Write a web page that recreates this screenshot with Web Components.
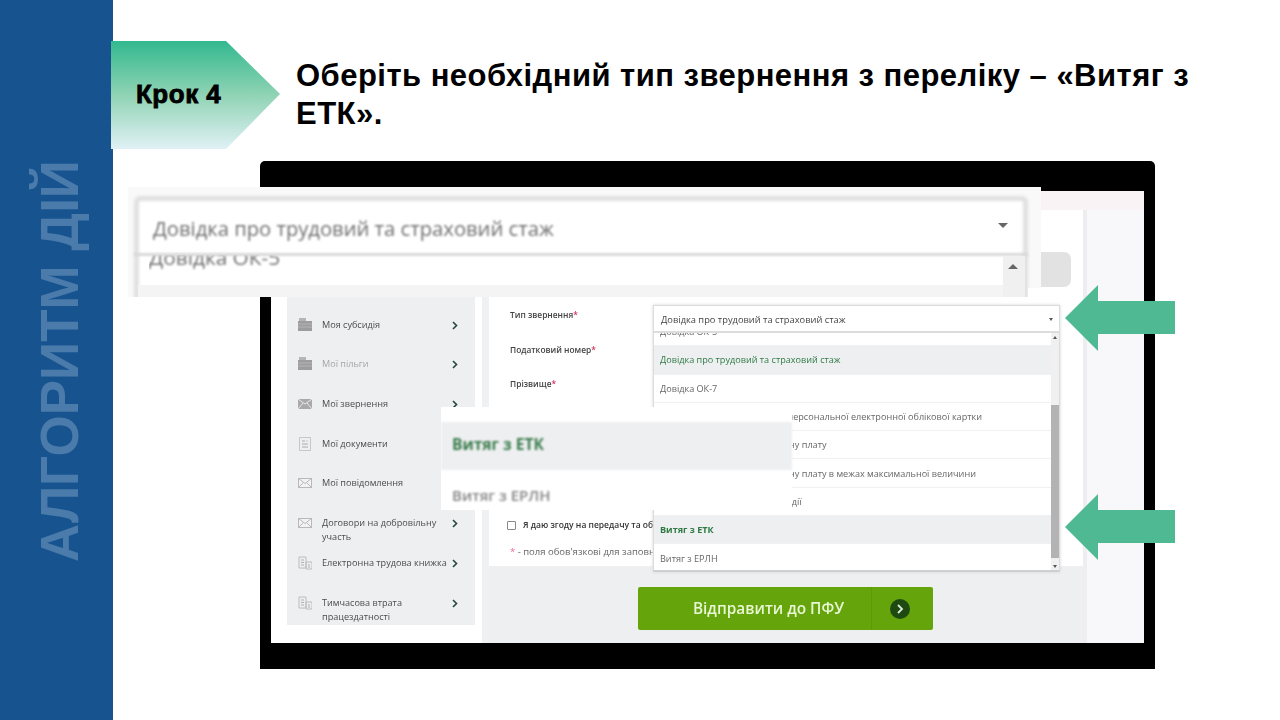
<!DOCTYPE html>
<html lang="uk">
<head>
<meta charset="utf-8">
<title>Крок 4</title>
<style>
	html, body { margin: 0; padding: 0; background: #fff; }
	body { width: 1280px; height: 720px; overflow: hidden; font-family: "Liberation Sans", sans-serif; }
	slide-page { width: 1280px; height: 720px; }
</style>
</head>
<body>
<slide-page>
	<side-rail slot="rail">АЛГОРИТМ ДІЙ</side-rail>
	<step-badge slot="head">Крок 4</step-badge>
	<slide-title slot="head">Оберіть необхідний тип звернення з переліку – «Витяг з ЕТК».</slide-title>
	<monitor-frame slot="body"></monitor-frame>
</slide-page>

<script>
const ICONS = {
	folder: '<rect x="1" y="0" width="7" height="3" fill="#b5b5b7"/><rect x="0" y="3" width="14" height="10" fill="#9d9d9f"/><path d="M0 6h14M0 9h14" stroke="#bdbdbf" stroke-width=".7"/>',
	mail: '<rect x="0" y="2" width="14" height="10" fill="#a9a9ab"/><path d="M0 2l7 5 7-5M0 12l5-6M14 12l-5-6" stroke="#e8e8ea" fill="none"/>',
	mailline: '<rect x=".5" y="2.5" width="13" height="9" fill="#f2f2f4" stroke="#b9b9bb"/><path d="M.5 2.5l6.5 5 6.5-5M.5 11.5l5-5M13.5 11.5l-5-5" stroke="#b9b9bb" fill="none"/>',
	doc: '<rect x="1.5" y=".5" width="11" height="13" fill="none" stroke="#c8c8ca"/><path d="M4 4h3M4 7h6M4 10h6" stroke="#aaaaac"/><path d="M9 3v2" stroke="#c8c8ca"/>',
	book: '<path d="M1 1h7v11H1zM8 6h6v7H8z" fill="none" stroke="#bcbcbe"/><path d="M3 4h3M3 6.5h3M3 9h3M10 9h2M10 11h2" stroke="#b0b0b2"/>'
};

class SlidePage extends HTMLElement {
	constructor() {
		super();
		this.attachShadow({ mode: 'open' });
		this.shadowRoot.innerHTML = `
			<style>
				:host { display: flex; }
				main { flex: 1; min-width: 0; display: flex; flex-direction: column; }
				header { display: flex; margin-left: -2px; padding-top: 41px; height: 108px; }
			</style>
			<slot name="rail"></slot>
			<main>
				<header><slot name="head"></slot></header>
				<slot name="body"></slot>
			</main>
		`;
	}
}

class SideRail extends HTMLElement {
	constructor() {
		super();
		this.attachShadow({ mode: 'open' });
		this.shadowRoot.innerHTML = `
			<style>
				:host { display: flex; flex: none; width: 113px; height: 720px; background: #17548f; position: relative; z-index: 1; }
				span {
					writing-mode: vertical-rl;
					transform: rotate(180deg);
					margin: 162px 0 0 33px;
					height: 400px;
					font: bold 53px/53px "Liberation Sans", sans-serif;
					color: #4a7bab;
					white-space: nowrap;
				}
			</style>
			<span><slot></slot></span>
		`;
	}
}

class StepBadge extends HTMLElement {
	constructor() {
		super();
		this.attachShadow({ mode: 'open' });
		this.shadowRoot.innerHTML = `
			<style>
				:host {
					display: flex;
					flex: none;
					align-items: center;
					box-sizing: border-box;
					width: 169px;
					height: 108px;
					padding: 0 0 1px 25px;
					background: linear-gradient(#33b98f, #8fd3b4 50%, #e0f1f5);
					clip-path: polygon(0 0, 115px 0, 169px 53px, 115px 108px, 0 108px);
					position: relative;
					z-index: 2;
					font: bold 26px "Liberation Sans", sans-serif;
					letter-spacing: .5px;
					color: #000;
					-webkit-text-stroke: .8px #000;
				}
			</style>
			<slot></slot>
		`;
	}
}

class SlideTitle extends HTMLElement {
	constructor() {
		super();
		this.attachShadow({ mode: 'open' });
		this.shadowRoot.innerHTML = `
			<style>
				:host {
					display: block;
					margin: 16px 0 0 16px;
					width: 920px;
					font: bold 31px/38px "Liberation Sans", sans-serif;
					letter-spacing: .47px;
					color: #000;
				}
			</style>
			<slot></slot>
		`;
	}
}

class MonitorFrame extends HTMLElement {
	constructor() {
		super();
		this.attachShadow({ mode: 'open' });
		this.shadowRoot.innerHTML = `
			<style>
				:host {
					display: block;
					box-sizing: border-box;
					position: relative;
					width: 895px;
					height: 508px;
					margin: 12px 0 0 147px;
					padding: 30px 11px 26px;
					background: #000;
					border-radius: 5px 5px 0 0;
				}
				.screen { height: 452px; display: flex; flex-direction: column; background: #fff; filter: blur(.45px); }
				.top { flex: none; height: 19px; background: #f9f3f6; }
				.work { flex: 1; display: flex; min-height: 0; }
				.gutter { flex: none; width: 7px; background: #f0f1f3; }
				.page { flex: none; width: 594px; display: flex; flex-direction: column; background: #eeeff1; }
				.pad { flex: none; height: 86px; background: #fff; }
				.bottom { flex: 1; display: flex; justify-content: center; padding: 21px 2px 0 0; }
				.edge { flex: none; width: 4px; background: #eeeef0; }
				.far { flex: 1; background: #f8f8fb; }
				.grey-btn {
					position: absolute;
					left: 781px;
					top: 91px;
					width: 30px;
					height: 35px;
					background: #e2e2e2;
					border-radius: 0 7px 7px 0;
				}
			</style>
			<div class="screen">
				<div class="top"></div>
				<div class="work">
					<portal-nav></portal-nav>
					<div class="gutter"></div>
					<div class="page">
						<div class="pad"></div>
						<request-form></request-form>
						<div class="bottom"><send-button>Відправити до ПФУ</send-button></div>
					</div>
					<div class="edge"></div>
					<div class="far"></div>
				</div>
			</div>
			<div class="grey-btn"></div>
			<zoom-top></zoom-top>
			<zoom-bottom></zoom-bottom>
			<pointer-arrow style="top:124px"></pointer-arrow>
			<pointer-arrow style="top:333px"></pointer-arrow>
		`;
	}
}

class PortalNav extends HTMLElement {
	constructor() {
		super();
		this.attachShadow({ mode: 'open' });
		this.shadowRoot.innerHTML = `
			<style>
				:host { display: block; flex: none; width: 211px; padding-top: 86px; box-sizing: border-box; background: #fff; }
				.panel { box-sizing: border-box; height: 329px; margin-left: 16px; width: 188px; padding-top: 9.7px; background: #eeeff1; }
			</style>
			<div class="panel">
				<nav-item icon="folder">Моя субсидія</nav-item>
				<nav-item icon="folder" muted>Мої пільги</nav-item>
				<nav-item icon="mail">Мої звернення</nav-item>
				<nav-item icon="doc">Мої документи</nav-item>
				<nav-item icon="mailline">Мої повідомлення</nav-item>
				<nav-item icon="mailline">Договори на добровільну участь</nav-item>
				<nav-item icon="book">Електронна трудова книжка</nav-item>
				<nav-item icon="book">Тимчасова втрата працездатності</nav-item>
			</div>
		`;
	}
}

class NavItem extends HTMLElement {
	constructor() {
		super();
		this.attachShadow({ mode: 'open' });
	}

	connectedCallback() {
		const icon = ICONS[this.getAttribute('icon')] || '';
		this.shadowRoot.innerHTML = `
			<style>
				:host {
					display: flex;
					box-sizing: border-box;
					height: 39.7px;
					padding: 12px 0 0 11px;
					font: 9.1px/14px "Open Sans", sans-serif;
					color: ${this.hasAttribute('muted') ? '#a6a6a8' : '#4b4b4d'};
				}
				.icon { flex: none; width: 14px; height: 14px; margin-right: 10px; }
				.label { width: 129px; flex: none; }
				.chev { flex: none; width: 6px; height: 9px; margin: 3px 0 0 1px; }
			</style>
			<svg class="icon" viewBox="0 0 14 14">${icon}</svg>
			<span class="label"><slot></slot></span>
			<svg class="chev" viewBox="0 0 6 9"><path d="M1 1l3.5 3.5L1 8" fill="none" stroke="#27463a" stroke-width="1.6"/></svg>
		`;
	}
}

class RequestForm extends HTMLElement {
	constructor() {
		super();
		this.attachShadow({ mode: 'open' });
		this.shadowRoot.innerHTML = `
			<style>
				:host {
					display: flex;
					flex-direction: column;
					flex: none;
					box-sizing: border-box;
					position: relative;
					height: 270px;
					padding: 12.4px 0 0 21px;
					background: #fff;
					font: 8.4px/14px "Open Sans", sans-serif;
					color: #444;
				}
				.row { flex: none; height: 34.5px; font-weight: 600; }
				b { color: #d0345e; font-weight: 600; }
				.agree, .note { white-space: nowrap; }
				.agree { margin: auto 0 0 -3px; display: flex; align-items: center; gap: 7px; font-weight: 600; color: #333; font-size: 8.5px; }
				.box { flex: none; width: 7px; height: 7px; border: 1px solid #888; border-radius: 1px; }
				.note { margin: 13px 0 7px; color: #666; font-size: 9.5px; }
				.note b { color: #ee6f90; font-weight: 400; }
				request-select { position: absolute; left: 164px; top: 9px; }
			</style>
			<div class="row">Тип звернення<b>*</b></div>
			<div class="row">Податковий номер<b>*</b></div>
			<div class="row">Прізвище<b>*</b></div>
			<div class="agree"><span class="box"></span><span>Я даю згоду на передачу та об</span></div>
			<div class="note"><b>*</b> - поля обов'язкові для заповне</div>
			<request-select></request-select>
		`;
	}
}

class RequestSelect extends HTMLElement {
	constructor() {
		super();
		this.attachShadow({ mode: 'open' });
		this.shadowRoot.innerHTML = `
			<style>
				:host {
					display: block;
					box-sizing: border-box;
					width: 407px;
					height: 267px;
					background: #fff;
					border: 1px solid #dcdcde;
					border-bottom: 2px solid #cfcfd1;
					box-shadow: 0 0 3px #d5d5d7;
					font: 9.1px "Open Sans", sans-serif;
					color: #666;
					overflow: hidden;
				}
				.value {
					box-sizing: border-box;
					height: 27px;
					display: flex;
					align-items: center;
					justify-content: space-between;
					padding: 2px 6px 0 7px;
					color: #444;
					font-size: 9.3px;
					border-bottom: 2px solid #dcdcde;
					background: #fff;
					position: relative;
				}
				.value i { width: 0; height: 0; border: 2.5px solid transparent; border-top: 3px solid #555; border-bottom: 0; }
				.list { position: relative; height: 238px; overflow: hidden; padding-right: 8px; }
				.opts { margin-top: -15px; }
				.bar { position: absolute; right: 0; top: 0; bottom: 0; width: 8px; background: #f0f0f1; }
				.thumb { position: absolute; left: 0; right: 0; top: 72px; height: 153px; background: #b3b3b4; }
				.up, .down { position: absolute; left: 2px; width: 0; height: 0; border: 2px solid transparent; }
				.up { top: 3px; border-bottom: 3px solid #555; border-top: 0; }
				.down { bottom: 3px; border-top: 3px solid #555; border-bottom: 0; }
			</style>
			<div class="value">Довідка про трудовий та страховий стаж<i></i></div>
			<div class="list">
				<div class="opts">
					<select-option>Довідка ОК-5</select-option>
					<select-option active>Довідка про трудовий та страховий стаж</select-option>
					<select-option>Довідка ОК-7</select-option>
					<select-option>Інформація з індивідуальної персональної електронної облікової картки</select-option>
					<select-option>Довідка про середню заробітну плату</select-option>
					<select-option>Довідка про середню заробітну плату в межах максимальної величини</select-option>
					<select-option>Довідка про отримання субсидії</select-option>
					<select-option current>Витяг з ЕТК</select-option>
					<select-option>Витяг з ЕРЛН</select-option>
				</div>
				<div class="bar"><div class="up"></div><div class="thumb"></div><div class="down"></div></div>
			</div>
		`;
	}
}

class SelectOption extends HTMLElement {
	constructor() {
		super();
		this.attachShadow({ mode: 'open' });
	}

	connectedCallback() {
		const on = this.hasAttribute('active') || this.hasAttribute('current');
		this.shadowRoot.innerHTML = `
			<style>
				:host {
					display: flex;
					align-items: center;
					box-sizing: border-box;
					height: 28.3px;
					padding-left: 6px;
					white-space: nowrap;
					border-bottom: 1px solid #f1f1f2;
					background: ${on ? '#eeeff1' : '#fff'};
					color: ${on ? '#2f7a45' : '#666'};
					font-weight: ${this.hasAttribute('current') ? '700' : '400'};
				}
			</style>
			<slot></slot>
		`;
	}
}

class SendButton extends HTMLElement {
	constructor() {
		super();
		this.attachShadow({ mode: 'open' });
		this.shadowRoot.innerHTML = `
			<style>
				:host {
					display: flex;
					flex: none;
					box-sizing: border-box;
					width: 295px;
					height: 43px;
					background: #65a50b;
					border-radius: 2px;
					font: 600 15.4px "Open Sans", sans-serif;
					color: #e8f6d4;
				}
				.text { flex: 1; display: flex; align-items: center; justify-content: center; padding-left: 29px; white-space: nowrap; }
				.go { flex: none; box-sizing: border-box; width: 62px; padding-right: 4px; display: flex; align-items: center; justify-content: center; border-left: 1px solid #5d9a0a; }
				svg { width: 20px; height: 20px; }
			</style>
			<div class="text"><slot></slot></div>
			<div class="go">
				<svg viewBox="0 0 20 20"><circle cx="10" cy="10" r="10" fill="#1e4a12"/><path d="M8 6l4 4-4 4" fill="none" stroke="#dfe9d8" stroke-width="1.8"/></svg>
			</div>
		`;
	}
}

class ZoomTop extends HTMLElement {
	constructor() {
		super();
		this.attachShadow({ mode: 'open' });
		this.shadowRoot.innerHTML = `
			<style>
				:host {
					position: absolute;
					left: -132px;
					top: 26px;
					width: 913px;
					height: 110px;
					background: #f9f9f9;
					clip-path: polygon(0 0, 100% 0, 100% 101px, 900px 101px, 900px 100%, 0 100%);
					font: 20.2px "Open Sans", sans-serif;
					color: #6f6f6f;
				}
				.frame { position: absolute; left: 6px; top: 9px; width: 894px; height: 120px; box-sizing: border-box; background: #fff; border: 5px solid #e0e0e0; border-radius: 6px 6px 0 0; filter: blur(1.5px); }
				.value { position: absolute; left: 25px; top: 27px; filter: blur(1px); white-space: nowrap; }
				.line { position: absolute; left: 6px; top: 66px; width: 894px; height: 3px; background: #d8d8d9; filter: blur(.8px); }
				.clip { position: absolute; left: 21px; top: 68px; width: 400px; height: 30px; overflow: hidden; }
				.opt { margin-top: -12px; font-size: 20.8px; filter: blur(1px); white-space: nowrap; }
				.down { position: absolute; left: 870px; top: 36px; width: 0; height: 0; border: 5px solid transparent; border-top: 5px solid #666; border-bottom: 0; filter: blur(.7px); }
				.sb { position: absolute; left: 875px; top: 69px; width: 22px; height: 41px; background: #f0f0f1; filter: blur(.5px); }
				.sb i { position: absolute; left: 5px; top: 8px; width: 0; height: 0; border: 5px solid transparent; border-bottom: 5px solid #666; border-top: 0; }
				.band { position: absolute; left: 10px; top: 98px; width: 865px; height: 12px; background: #f4f4f5; }
			</style>
			<div class="frame"></div>
			<div class="value">Довідка про трудовий та страховий стаж</div>
			<i class="down"></i>
			<div class="band"></div>
			<div class="clip"><div class="opt">Довідка ОК-5</div></div>
			<div class="line"></div>
			<div class="sb"><i></i></div>
		`;
	}
}

class ZoomBottom extends HTMLElement {
	constructor() {
		super();
		this.attachShadow({ mode: 'open' });
		this.shadowRoot.innerHTML = `
			<style>
				:host {
					position: absolute;
					left: 181px;
					top: 246px;
					width: 351px;
					height: 103px;
					display: flex;
					flex-direction: column;
					background: #fff;
					font: 700 15.6px "Open Sans", sans-serif;
				}
				.gap { flex: none; height: 15px; }
				.row { flex: none; box-sizing: border-box; display: flex; align-items: center; padding-left: 11px; filter: blur(.9px); }
				.on { height: 48px; background: #eeeff1; color: #3b7d4c; padding-bottom: 4px; }
				.off { height: 40px; padding-top: 9px; color: #868686; font-weight: 600; font-size: 15px; }
			</style>
			<div class="gap"></div>
			<div class="row on">Витяг з ЕТК</div>
			<div class="row off">Витяг з ЕРЛН</div>
		`;
	}
}

class PointerArrow extends HTMLElement {
	constructor() {
		super();
		this.attachShadow({ mode: 'open' });
		this.shadowRoot.innerHTML = `
			<style>
				:host { position: absolute; left: 805px; width: 110px; height: 66px; }
				svg { display: block; }
			</style>
			<svg width="110" height="66" viewBox="0 0 110 66"><path d="M0 33L33 0v16h77v33H33v17z" fill="#4fb993"/></svg>
		`;
	}
}

customElements.define('side-rail', SideRail);
customElements.define('step-badge', StepBadge);
customElements.define('slide-title', SlideTitle);
customElements.define('nav-item', NavItem);
customElements.define('portal-nav', PortalNav);
customElements.define('select-option', SelectOption);
customElements.define('request-select', RequestSelect);
customElements.define('request-form', RequestForm);
customElements.define('send-button', SendButton);
customElements.define('zoom-top', ZoomTop);
customElements.define('zoom-bottom', ZoomBottom);
customElements.define('pointer-arrow', PointerArrow);
customElements.define('monitor-frame', MonitorFrame);
customElements.define('slide-page', SlidePage);
</script>
</body>
</html>
